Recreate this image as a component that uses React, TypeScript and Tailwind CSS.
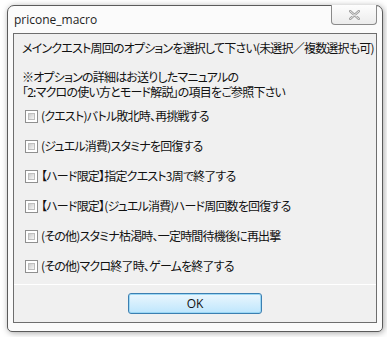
import { useState } from "react";

const options = [
  "(クエスト)バトル敗北時、再挑戦する",
  "(ジュエル消費)スタミナを回復する",
  "【ハード限定】指定クエスト3周で終了する",
  "【ハード限定】(ジュエル消費)ハード周回数を回復する",
  "(その他)スタミナ枯渇時、一定時間待機後に再出撃",
  "(その他)マクロ終了時、ゲームを終了する",
];

const jp = "font-['Noto_Sans_CJK_JP','Noto_Sans',sans-serif] [font-feature-settings:'palt'] tracking-[-0.8px] whitespace-nowrap";

const Check = ({ checked, onClick }: { checked: boolean; onClick: () => void }) => (
  <span
    onClick={onClick}
    className="w-[13px] h-[13px] shrink-0 border border-[#8f8f8f] bg-white p-[2px] flex"
  >
    <span className="flex-1 border border-[#bdbdbd] bg-gradient-to-br from-[#cbcbcb] to-[#f6f6f6] flex items-center justify-center text-[9px] leading-none text-[#1f3f73]">
      {checked ? "✓" : ""}
    </span>
  </span>
);

export default function App() {
  const [checked, setChecked] = useState<boolean[]>(options.map(() => false));

  return (
    <div className="w-[387px] h-[337px] bg-white pt-[5px] pl-[7px]">
      <div className="relative w-[376px] h-[327px] rounded-t-[7px] rounded-b-[5px] border border-[#5b5b5b] bg-[#fbfbfb] shadow-[1px_1px_6px_rgba(0,0,0,0.35)] flex flex-col">
        {/* title bar */}
        <div className="h-[27px] pl-[6px] flex items-center font-['Open_Sans','Noto_Sans',sans-serif] text-[12px] text-[#1e1e1e]">
          pricone_macro
        </div>
        <div className="absolute top-[-1px] right-[5px] w-[46px] h-[20px] rounded-b-[4px] border border-[#8a8a8a] border-t-0 bg-gradient-to-b from-[#fdfdfd] to-[#ececec] flex items-center justify-center">
          <svg width="11" height="10" viewBox="0 0 11 10">
            <path d="M1 1 L10 9 M10 1 L1 9" stroke="#a0a0a0" strokeWidth="2.4" strokeLinecap="round" />
            <path d="M1 1 L10 9 M10 1 L1 9" stroke="#f4f4f4" strokeWidth="0.8" strokeLinecap="round" />
          </svg>
        </div>

        {/* client area */}
        <div className={`mx-[5px] mb-[8px] flex-1 border border-[#6e6e6e] bg-[#f0f0f0] flex flex-col text-[12px] text-[#111] ${jp}`}>
          <div className="flex-1 pl-[8px] pt-[6px]">
            <p className="leading-[16px]">メインクエスト周回のオプションを選択して下さい(未選択／複数選択も可)</p>
            <div className="mt-[13px] leading-[15px]">
              <p>※オプションの詳細はお送りしたマニュアルの</p>
              <p>「2:マクロの使い方とモード解説」の項目をご参照下さい</p>
            </div>
            <div className="mt-[9px] flex flex-col gap-[14px] pl-[3px]">
              {options.map((o, i) => (
                <label key={i} className="flex items-center gap-[3px] h-[16px] leading-[16px]">
                  <Check
                    checked={checked[i]}
                    onClick={() => setChecked((c) => c.map((v, j) => (j === i ? !v : v)))}
                  />
                  <span>{o}</span>
                </label>
              ))}
            </div>
          </div>
          <div className="h-[38px] border-t border-white flex items-start justify-center pt-[8px]">
            <button className="w-[134px] h-[21px] rounded-[3px] border border-[#3c7fb1] bg-gradient-to-b from-[#eaf6fd] to-[#bee6fd] shadow-[inset_0_0_0_1px_#9cd8f5] text-[12px] leading-none tracking-normal text-[#111] font-['Open_Sans','Noto_Sans',sans-serif]">
              OK
            </button>
          </div>
        </div>
      </div>
    </div>
  );
}
